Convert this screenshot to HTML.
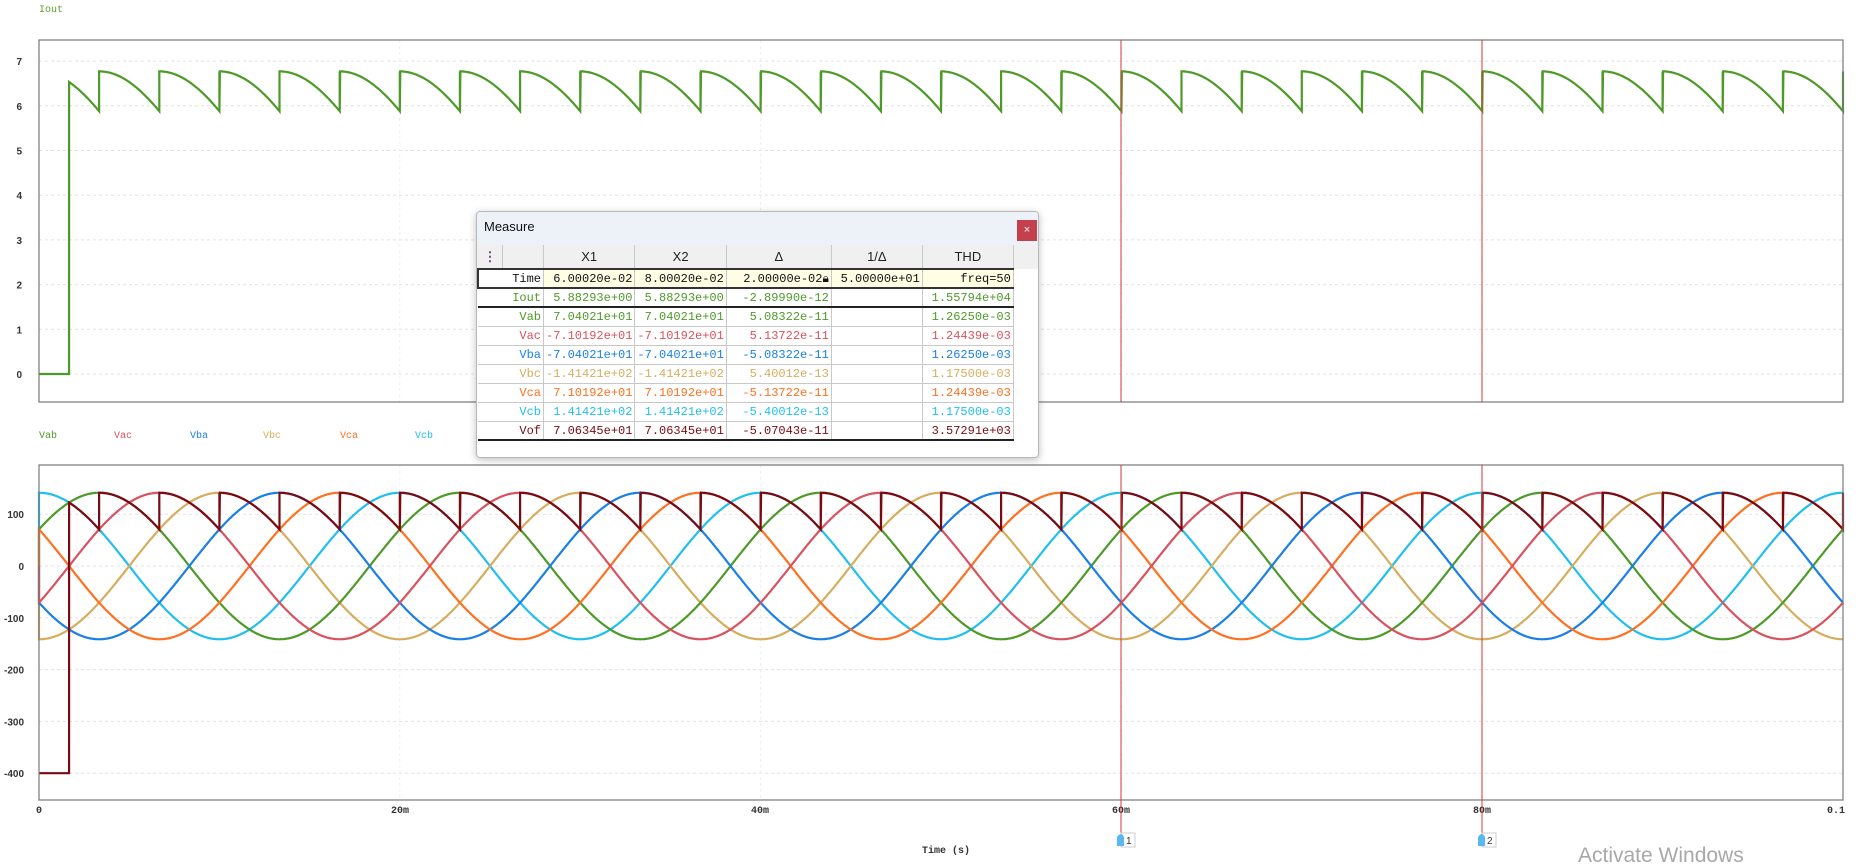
<!DOCTYPE html>
<html><head><meta charset="utf-8">
<style>
html,body{margin:0;padding:0;background:#fff;width:1858px;height:865px;overflow:hidden;font-family:"Liberation Sans",sans-serif}
svg{position:absolute;left:0;top:0}
.dlg{position:absolute;left:476px;top:211px;width:561px;height:245px;border:1px solid #b8b8b8;border-radius:4px;background:#fff;box-shadow:0 2px 8px rgba(0,0,0,.25);overflow:hidden}
.tb{height:33px;background:#edf1f8;font-size:13px;line-height:30px;padding-left:7px;color:#111}
.cls{position:absolute;right:1px;top:8px;width:20px;height:21px;background:#c4404c;color:#fff;font-size:11px;text-align:center;line-height:21px}
table{border-collapse:collapse;font-family:"Liberation Mono",monospace;font-size:12px;position:absolute;left:0;top:33px}
td{height:18px;padding:0 2px;text-align:right;border-bottom:1px solid #c8c8c8;border-right:1px solid #c8c8c8;white-space:nowrap}
tr.h td{height:23px;background:#f0f0f0;font-family:"Liberation Sans",sans-serif;font-size:13px;text-align:center;color:#222}
tr.t td{height:17px;background:#fffde4;color:#111;border-top:2px solid #333;border-bottom:2px solid #333}
tr.t td:first-child{background:#fff;border-left:2px solid #333}
tr.b td{height:17px;border-bottom:2px solid #222}
.hbg{position:absolute;left:0;top:33px;width:561px;height:24px;background:#f0f0f0}
</style></head><body>
<svg width="1858" height="865" xmlns="http://www.w3.org/2000/svg" id="s">
<g font-family="Liberation Mono, monospace" font-size="10" font-weight="bold" fill="#333">
<text x="39" y="12" fill="#5a9f2e" font-weight="normal">Iout</text>
<text x="39" y="438" fill="#4e9a28" font-weight="normal">Vab</text>
<text x="114" y="438" fill="#d9525f" font-weight="normal">Vac</text>
<text x="190" y="438" fill="#1a7fe8" font-weight="normal">Vba</text>
<text x="263" y="438" fill="#d6ad5e" font-weight="normal">Vbc</text>
<text x="340" y="438" fill="#ff7020" font-weight="normal">Vca</text>
<text x="415" y="438" fill="#20bff0" font-weight="normal">Vcb</text>
<text x="39" y="813" text-anchor="middle">0</text>
<text x="400" y="813" text-anchor="middle">20m</text>
<text x="760" y="813" text-anchor="middle">40m</text>
<text x="1121" y="813" text-anchor="middle">60m</text>
<text x="1482" y="813" text-anchor="middle">80m</text>
<text x="1836" y="813" text-anchor="middle">0.1</text>
<text x="946" y="853" text-anchor="middle">Time (s)</text>
</g>
<text x="1578" y="862" font-family="Liberation Sans, sans-serif" font-size="21" fill="#a8a8a8">Activate Windows</text>
<g id="g"></g>
</svg>
<div class="dlg">
<div class="tb">Measure</div>
<div class="cls">×</div>
<div class="hbg"></div>
<table>
<tr class="h"><td style="width:20px;color:#6a3b8a;font-weight:bold">⋮</td><td style="width:36px"></td><td style="width:86px">X1</td><td style="width:86px">X2</td><td style="width:100px">Δ</td><td style="width:86px">1/Δ</td><td style="width:86px">THD</td></tr>
<tr class="t"><td colspan="2">Time</td><td>6.00020e-02</td><td>8.00020e-02</td><td>2.00000e-02&#x1F512;&#xFE0E;</td><td>5.00000e+01</td><td>freq=50</td></tr>
<tr class="b" style="color:#4e9a28"><td colspan="2">Iout</td><td>5.88293e+00</td><td>5.88293e+00</td><td>-2.89990e-12</td><td></td><td>1.55794e+04</td></tr>
<tr style="color:#4e9a28"><td colspan="2">Vab</td><td>7.04021e+01</td><td>7.04021e+01</td><td>5.08322e-11</td><td></td><td>1.26250e-03</td></tr>
<tr style="color:#d9525f"><td colspan="2">Vac</td><td>-7.10192e+01</td><td>-7.10192e+01</td><td>5.13722e-11</td><td></td><td>1.24439e-03</td></tr>
<tr style="color:#1a7fe8"><td colspan="2">Vba</td><td>-7.04021e+01</td><td>-7.04021e+01</td><td>-5.08322e-11</td><td></td><td>1.26250e-03</td></tr>
<tr style="color:#d6ad5e"><td colspan="2">Vbc</td><td>-1.41421e+02</td><td>-1.41421e+02</td><td>5.40012e-13</td><td></td><td>1.17500e-03</td></tr>
<tr style="color:#ff7020"><td colspan="2">Vca</td><td>7.10192e+01</td><td>7.10192e+01</td><td>-5.13722e-11</td><td></td><td>1.24439e-03</td></tr>
<tr style="color:#20bff0"><td colspan="2">Vcb</td><td>1.41421e+02</td><td>1.41421e+02</td><td>-5.40012e-13</td><td></td><td>1.17500e-03</td></tr>
<tr class="b" style="color:#7a0a12"><td colspan="2">Vof</td><td>7.06345e+01</td><td>7.06345e+01</td><td>-5.07043e-11</td><td></td><td>3.57291e+03</td></tr>
</table>
</div>
<script>
(function(){
var g=document.getElementById('g'),o='';
var L=39,R=1843;function X(t){return L+t/0.1*(R-L);}
var tT=40,tB=402;function Y1(v){return 374-v*44.7;}
var bT=465,bB=800;function Y2(v){return 566-v*0.518;}
function grid(y){o+='<line x1="'+L+'" x2="'+R+'" y1="'+y+'" y2="'+y+'" stroke="#e2e2e2" stroke-dasharray="3,3"/>';}
for(var v=0;v<=7;v++){grid(Y1(v));o+='<text x="22" y="'+(Y1(v)+4)+'" font-family="Liberation Sans,sans-serif" font-size="10" font-weight="bold" fill="#333" text-anchor="end">'+v+'</text>';}
for(var v=100;v>=-400;v-=100){grid(Y2(v));o+='<text x="24" y="'+(Y2(v)+4)+'" font-family="Liberation Sans,sans-serif" font-size="10" font-weight="bold" fill="#333" text-anchor="end">'+v+'</text>';}
for(var k=1;k<5;k++){var x=X(k*0.02);o+='<line x1="'+x+'" x2="'+x+'" y1="'+tT+'" y2="'+tB+'" stroke="#eee" stroke-dasharray="3,3"/><line x1="'+x+'" x2="'+x+'" y1="'+bT+'" y2="'+bB+'" stroke="#eee" stroke-dasharray="3,3"/>';}
var w=2*Math.PI*50,A=141.42,D=Math.PI/180;
var ph={Vcb:[90,'#20bff0'],Vbc:[-90,'#d6ad5e'],Vab:[30,'#4e9a28'],Vba:[210,'#1a7fe8'],Vca:[150,'#ff7020'],Vac:[-30,'#d9525f']};
var N=3600;
for(var k in ph){var p=ph[k],d='M'+L+' '+Y2(0);for(var i=0;i<=N;i++){var t=0.1*i/N;d+=' L'+X(t).toFixed(1)+' '+Y2(A*Math.sin(w*t+p[0]*D)).toFixed(1);}
o+='<path d="'+d+'" fill="none" stroke="'+p[1]+'" stroke-width="2.2"/>';}
var T6=0.02/6,t0=T6/2;
function vof(t){var tau=t%T6;return A*Math.cos(w*tau);}
var d1='M'+L+' '+Y2(-400)+' L'+X(t0)+' '+Y2(-400);
var d2='M'+L+' '+Y1(0)+' L'+X(t0)+' '+Y1(0);
var prev=-1;
for(var i=0;i<=N;i++){var t=0.1*i/N;if(t<t0)continue;var s=Math.floor(t/T6+1e-9);
if(prev>=0&&s!=prev){var tj=s*T6;d1+=' L'+X(tj).toFixed(1)+' '+Y2(A*Math.cos(Math.PI/3)).toFixed(1)+' L'+X(tj).toFixed(1)+' '+Y2(A).toFixed(1);
d2+=' L'+X(tj).toFixed(1)+' '+Y1(5.88).toFixed(1)+' L'+X(tj).toFixed(1)+' '+Y1(6.77).toFixed(1);}
prev=s;var v=vof(t);d1+=' L'+X(t).toFixed(1)+' '+Y2(v).toFixed(1);d2+=' L'+X(t).toFixed(1)+' '+Y1(5.88+(v-70.71)*0.01259).toFixed(1);}
o+='<path d="'+d1+'" fill="none" stroke="#7a0a12" stroke-width="2.2"/>';
o+='<path d="'+d2+'" fill="none" stroke="#4e9a28" stroke-width="2.2"/>';
o+='<rect x="'+L+'" y="'+tT+'" width="'+(R-L)+'" height="'+(tB-tT)+'" fill="none" stroke="#777" stroke-width="1.2"/>';
o+='<rect x="'+L+'" y="'+bT+'" width="'+(R-L)+'" height="'+(bB-bT)+'" fill="none" stroke="#777" stroke-width="1.2"/>';
[[1121,'1'],[1482,'2']].forEach(function(c){var x=c[0];
o+='<line x1="'+x+'" x2="'+x+'" y1="'+tT+'" y2="'+tB+'" stroke="#d23a3a" stroke-width="1"/>';
o+='<line x1="'+x+'" x2="'+x+'" y1="'+bT+'" y2="840" stroke="#d23a3a" stroke-width="1"/>';
o+='<rect x="'+x+'" y="833" width="14" height="14" fill="#fff" stroke="#ccc"/><path d="M'+(x-4)+' 846 L'+(x-4)+' 837 Q'+x+' 831 '+(x+3)+' 837 L'+(x+3)+' 846 Z" fill="#5ab8f0"/>';
o+='<text x="'+(x+5)+'" y="844" font-family="Liberation Sans,sans-serif" font-size="10" fill="#333">'+c[1]+'</text>';});
g.innerHTML=o;
})();
</script>
</body></html>
